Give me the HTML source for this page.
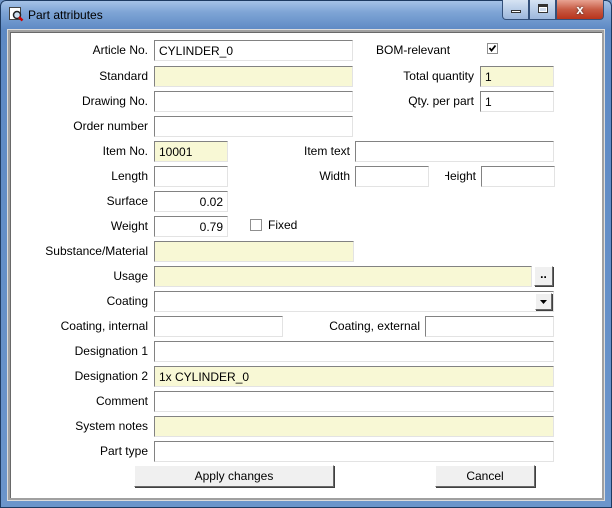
<!DOCTYPE html>
<html><head><meta charset="utf-8"><style>
*{box-sizing:border-box;margin:0;padding:0}
body{width:612px;height:508px;overflow:hidden;font-family:"Liberation Sans",Arial,sans-serif;font-size:12px;color:#000;background:#6f94c6;position:relative}
.win{position:absolute;left:0;top:0;width:612px;height:508px;border-radius:6px 6px 0 0;background:linear-gradient(180deg,#a9c5e8 0,#7fa5d6 12px,#5d89c4 30px,#6b95cb 100%)}
.frame{position:absolute;left:0;top:0;width:612px;height:508px;border:1px solid #1e3b62;border-radius:6px 6px 0 0}
.title{position:absolute;left:28px;top:8px;font-size:12px;color:#000}
.panel{position:absolute;left:8px;top:30px;width:596px;height:470px;background:#fff;border:2px solid #a0a0a0;box-shadow:inset 1px 1px 0 #696969,0 0 0 1px #dcdcdc}
.l{position:absolute;text-align:right;white-space:nowrap;line-height:14px}
.f{position:absolute;height:21px;background:#fff;border-top:1px solid #828282;border-left:1px solid #828282;border-right:1px solid #e3e3e3;border-bottom:1px solid #e3e3e3;padding:3px 4px;line-height:14px;white-space:nowrap}
.y{background:#f8f8d5}
.r{text-align:right}
.btn{position:absolute;background:#f0f0f0;border:1px solid #fff;border-right-color:#696969;border-bottom-color:#696969;box-shadow:1px 1px 0 #404040;text-align:center;line-height:20px}
.cb{position:absolute;width:12px;height:12px;border:1px solid #8f8f8f;background:#fff}
.tb{position:absolute;top:0;height:20px;border:1px solid #33507a;border-top:none}
</style></head><body>
<div class="win"></div>
<div class="frame"></div>
<svg style="position:absolute;left:8px;top:6px" width="16" height="16" viewBox="0 0 16 16"><rect x="1.5" y="1.5" width="11" height="12" fill="#fff" stroke="#444"/><circle cx="9" cy="9" r="3.5" fill="#cde" stroke="#222" stroke-width="1.5"/><path d="M11 11 L14.5 14.5" stroke="#c00" stroke-width="2.5"/></svg>
<div class="title">Part attributes</div>
<div class="tb" style="left:502px;width:27px;border-radius:0 0 0 4px;background:linear-gradient(#d6e3f3,#9cb7dc)"><div style="position:absolute;left:8px;top:10px;width:10px;height:3px;background:#fff;border:1px solid #333"></div></div>
<div class="tb" style="left:529px;width:27px;background:linear-gradient(#d6e3f3,#9cb7dc)"><div style="position:absolute;left:8px;top:4px;width:10px;height:9px;border:1px solid #333;border-top-width:3px;background:#cfdcee;box-shadow:inset 0 0 0 1px #fff"></div></div>
<div class="tb" style="left:556px;width:48px;border-radius:0 0 4px 0;background:linear-gradient(#e8a493,#c75b44 50%,#b8341c)"><div style="position:absolute;left:0;width:46px;top:2px;text-align:center;color:#fff;font-weight:bold;font-size:13px;text-shadow:0 0 2px #333">x</div></div>
<div class="panel"></div>

<div class="l" style="right:464px;top:43px">Article No.</div>
<div class="f" style="left:154px;top:40px;width:199px">CYLINDER_0</div>
<div class="l" style="left:376px;top:43px">BOM-relevant</div>
<div class="cb" style="left:487px;top:43px;width:11px;height:11px"><svg width="9" height="9" style="position:absolute;left:0;top:0"><path d="M1.5 4 L3.5 6.5 L7.5 1.5" stroke="#000" stroke-width="1.8" fill="none"/></svg></div>

<div class="l" style="right:464px;top:69px">Standard</div>
<div class="f y" style="left:154px;top:66px;width:199px"></div>
<div class="l" style="right:138px;top:69px">Total quantity</div>
<div class="f y" style="left:480px;top:66px;width:74px">1</div>

<div class="l" style="right:464px;top:94px">Drawing No.</div>
<div class="f" style="left:154px;top:91px;width:199px"></div>
<div class="l" style="right:138px;top:94px">Qty. per part</div>
<div class="f" style="left:480px;top:91px;width:74px">1</div>

<div class="l" style="right:464px;top:119px">Order number</div>
<div class="f" style="left:154px;top:116px;width:199px"></div>

<div class="l" style="right:464px;top:144px">Item No.</div>
<div class="f y" style="left:154px;top:141px;width:74px">10001</div>
<div class="l" style="right:262px;top:144px">Item text</div>
<div class="f" style="left:355px;top:141px;width:199px"></div>

<div class="l" style="right:464px;top:169px">Length</div>
<div class="f" style="left:154px;top:166px;width:74px"></div>
<div class="l" style="right:262px;top:169px">Width</div>
<div class="f" style="left:355px;top:166px;width:74px"></div>
<div class="l" style="left:445px;width:31px;height:14px;overflow:hidden;top:169px"><span style="position:absolute;right:0;top:0">Height</span></div>
<div class="f" style="left:481px;top:166px;width:74px"></div>

<div class="l" style="right:464px;top:194px">Surface</div>
<div class="f r" style="left:154px;top:191px;width:74px">0.02</div>

<div class="l" style="right:464px;top:219px">Weight</div>
<div class="f r" style="left:154px;top:216px;width:74px">0.79</div>
<div class="cb" style="left:250px;top:219px"></div>
<div class="l" style="left:268px;top:218px">Fixed</div>

<div class="l" style="right:464px;top:244px">Substance/Material</div>
<div class="f y" style="left:154px;top:241px;width:200px"></div>

<div class="l" style="right:464px;top:269px">Usage</div>
<div class="f y" style="left:154px;top:266px;width:378px"></div>
<div class="btn" style="left:534px;top:266px;width:19px;height:20px;line-height:14px;font-weight:bold">..</div>

<div class="l" style="right:464px;top:294px">Coating</div>
<div class="f" style="left:154px;top:291px;width:400px"></div>
<div class="btn" style="left:535px;top:293px;width:17px;height:17px"><svg width="15" height="15" style="position:absolute;left:0;top:0"><path d="M4 6 L11 6 L7.5 10Z" fill="#000"/></svg></div>

<div class="l" style="right:464px;top:319px">Coating, internal</div>
<div class="f" style="left:154px;top:316px;width:129px"></div>
<div class="l" style="right:192px;top:319px">Coating, external</div>
<div class="f" style="left:425px;top:316px;width:129px"></div>

<div class="l" style="right:464px;top:344px">Designation 1</div>
<div class="f" style="left:154px;top:341px;width:400px"></div>
<div class="l" style="right:464px;top:369px">Designation 2</div>
<div class="f y" style="left:154px;top:366px;width:400px">1x CYLINDER_0</div>
<div class="l" style="right:464px;top:394px">Comment</div>
<div class="f" style="left:154px;top:391px;width:400px"></div>
<div class="l" style="right:464px;top:419px">System notes</div>
<div class="f y" style="left:154px;top:416px;width:400px"></div>
<div class="l" style="right:464px;top:444px">Part type</div>
<div class="f" style="left:154px;top:441px;width:400px"></div>

<div class="btn" style="left:134px;top:465px;width:200px;height:22px">Apply changes</div>
<div class="btn" style="left:435px;top:465px;width:100px;height:22px">Cancel</div>
</body></html>
